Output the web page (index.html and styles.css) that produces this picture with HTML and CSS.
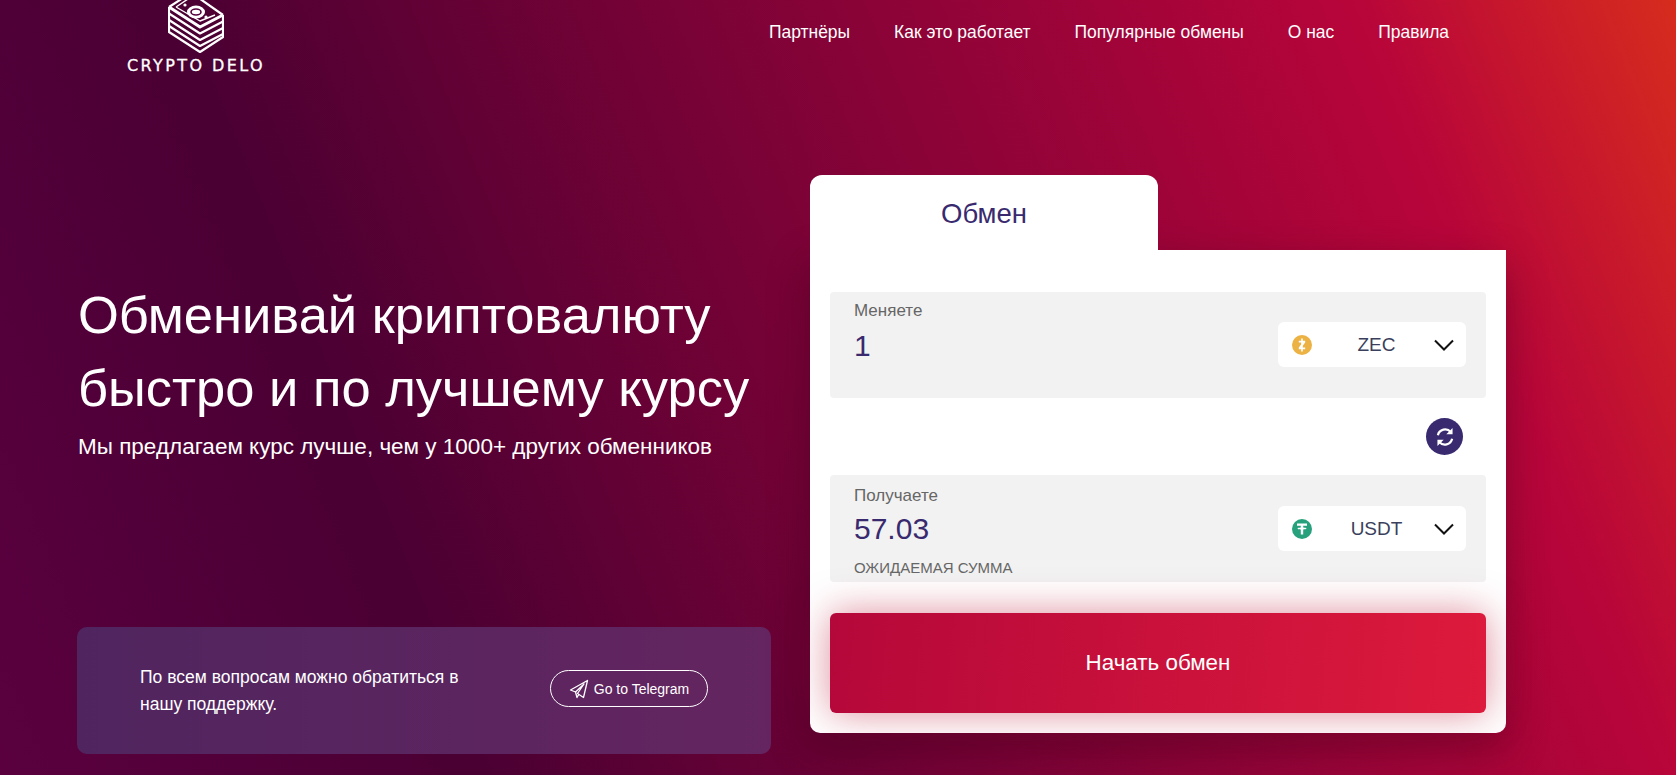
FILE: index.html
```html
<!DOCTYPE html>
<html lang="ru">
<head>
    <meta charset="UTF-8">
    <meta name="viewport" content="width=device-width, initial-scale=1.0">
    <title>Crypto Delo</title>
    <link rel="stylesheet" href="styles.css">
</head>
<body>
    <header class="header">
        <a class="logo" href="#">
            <svg class="logo-icon" width="56" height="54" viewBox="0 0 56 54" fill="none" stroke="#fff" stroke-width="2.2" stroke-linejoin="round">
                <path d="M1 7V32L32 52L55 37V15"/>
                <path d="M1 7L15 -2M55 15L28 -4"/>
                <path d="M1 7L32 27L55 15" stroke-width="3"/>
                <path d="M1 13.5L32 33.5L55 21.5"/>
                <path d="M1 20L32 40L55 28"/>
                <path d="M1 26L32 46L55 34"/>
                <path d="M8 7L20 -1M47 15L32 21L8 7" stroke-width="1.4"/>
                <ellipse cx="28" cy="12" rx="9" ry="6.5" fill="#fff" stroke="none"/>
                <ellipse cx="28" cy="12" rx="5" ry="3" stroke="#54003c" stroke-width="1.6"/>
                <circle cx="17" cy="5" r="1.6" fill="#fff" stroke="none"/>
                <circle cx="38" cy="17" r="1.6" fill="#fff" stroke="none"/>
            </svg>
            <span class="logo-text">CRYPTO DELO</span>
        </a>
        <nav class="nav">
            <a href="#">Партнёры</a>
            <a href="#">Как это работает</a>
            <a href="#">Популярные обмены</a>
            <a href="#">О нас</a>
            <a href="#">Правила</a>
        </nav>
    </header>

    <main class="main">
        <section class="hero">
            <h1>Обменивай криптовалюту быстро и по лучшему курсу</h1>
            <p class="hero-sub">Мы предлагаем курс лучше, чем у 1000+ других обменников</p>

            <div class="support">
                <p>По всем вопросам можно обратиться в нашу поддержку.</p>
                <a class="telegram-btn" href="#">
                    <svg width="20" height="20" viewBox="0 0 20 20" fill="none" stroke="#fff" stroke-width="1.3" stroke-linejoin="round">
                        <path d="M18.5 1.5L1.5 11L6.5 13L15 5L8.5 14.5L14.5 18.5Z"/>
                        <path d="M6.5 13L8 18.5L9.8 15.4"/>
                    </svg>
                    Go to Telegram
                </a>
            </div>
        </section>

        <section class="exchange">
            <div class="tab">Обмен</div>
            <div class="panel">
                <div class="field">
                    <div class="field-info">
                        <label>Меняете</label>
                        <div class="amount">1</div>
                    </div>
                    <div class="select">
                        <svg width="20" height="20" viewBox="0 0 20 20">
                            <circle cx="10" cy="10" r="10" fill="#ecb244"/>
                            <path d="M6.8 5.8H13.2V7.6L9.4 12.6H13.2V14.2H6.8V12.4L10.6 7.4H6.8Z" fill="#fff"/>
                            <path d="M9.2 3.6H10.8V16.4H9.2Z" fill="#fff"/>
                        </svg>
                        <span class="coin">ZEC</span>
                        <svg class="chevron" width="20" height="12" viewBox="0 0 20 12" fill="none" stroke="#111" stroke-width="2">
                            <path d="M1 1.5L10 10.5L19 1.5"/>
                        </svg>
                    </div>
                </div>

                <div class="swap-row">
                    <button class="swap">
                        <svg width="20" height="20" viewBox="0 0 18 18" fill="none" stroke="#fff" stroke-width="2">
                            <path d="M2.6 7.4A6.6 6.6 0 0 1 14.2 4.6"/>
                            <path d="M15.4 10.6A6.6 6.6 0 0 1 3.8 13.4"/>
                            <path d="M15.8 .8V6.6H10.2Z" fill="#fff" stroke="none"/>
                            <path d="M2.2 17.2V11.4H7.8Z" fill="#fff" stroke="none"/>
                        </svg>
                    </button>
                </div>

                <div class="field field-receive">
                    <div class="field-info">
                        <label>Получаете</label>
                        <div class="amount">57.03</div>
                        <div class="field-note">ОЖИДАЕМАЯ СУММА</div>
                    </div>
                    <div class="select">
                        <svg width="20" height="20" viewBox="0 0 20 20">
                            <circle cx="10" cy="10" r="10" fill="#26a17b"/>
                            <path d="M5 4.6H15V6.8H11.2V8.4C13 8.5 14.6 8.9 14.6 9.4C14.6 9.9 13 10.3 11.2 10.4V15.4H8.8V10.4C7 10.3 5.4 9.9 5.4 9.4C5.4 8.9 7 8.5 8.8 8.4V6.8H5Z" fill="#fff"/>
                        </svg>
                        <span class="coin">USDT</span>
                        <svg class="chevron" width="20" height="12" viewBox="0 0 20 12" fill="none" stroke="#111" stroke-width="2">
                            <path d="M1 1.5L10 10.5L19 1.5"/>
                        </svg>
                    </div>
                </div>

                <button class="start-btn">Начать обмен</button>
            </div>
        </section>
    </main>
</body>
</html>
```

FILE: styles.css
```css
* {
    margin: 0;
    padding: 0;
    box-sizing: border-box;
    font-family: "Liberation Sans", Arial, sans-serif;
}

html, body {
    height: 775px;
    overflow: hidden;
}

body {
    color: #fff;
    background: linear-gradient(68deg, #5a003f 0%, #4a0033 24%, #b8053a 84%, #d62c1d 100%);
}

a {
    color: inherit;
    text-decoration: none;
}

.header {
    display: flex;
    align-items: flex-start;
    height: 175px;
    padding-left: 128px;
}

.logo {
    display: flex;
    flex-direction: column;
    align-items: center;
    width: 136px;
}

.logo-icon {
    display: block;
    margin-left: -1px;
}

.logo-text {
    margin-top: 3px;
    font-family: "DejaVu Sans", sans-serif;
    font-size: 16px;
    line-height: 18px;
    letter-spacing: 2.4px;
    white-space: nowrap;
    -webkit-text-stroke: 0.3px #fff;
}

.nav {
    display: flex;
    gap: 44px;
    margin-left: 505px;
    padding-top: 22px;
    font-size: 17.45px;
    line-height: 20px;
}

.main {
    display: flex;
    padding-left: 77px;
}

.hero {
    display: flex;
    flex-direction: column;
    width: 694px;
    height: 579px;
    padding-top: 103px;
}

.hero h1 {
    padding-left: 1px;
    font-size: 52.5px;
    font-weight: 400;
    line-height: 73px;
}

.hero-sub {
    margin-top: 8px;
    padding-left: 1px;
    font-size: 22.5px;
    line-height: 30px;
}

.support {
    display: flex;
    align-items: center;
    justify-content: space-between;
    height: 127px;
    margin-top: auto;
    padding: 0 63px;
    border-radius: 10px;
    background: linear-gradient(90deg, #50255f, #642560);
}

.support p {
    width: 330px;
    font-size: 17.5px;
    line-height: 27px;
}

.telegram-btn {
    display: flex;
    align-items: center;
    justify-content: center;
    gap: 5px;
    width: 158px;
    height: 37px;
    margin-bottom: 4px;
    border: 1px solid #fff;
    border-radius: 19px;
    font-size: 14px;
}

.exchange {
    width: 696px;
    margin-left: 39px;
}

.tab {
    position: relative;
    z-index: 1;
    width: 348px;
    height: 75px;
    border-radius: 12px 12px 0 0;
    background: #fff;
    color: #392a6f;
    font-size: 27.5px;
    line-height: 77px;
    text-align: center;
}

.panel {
    height: 483px;
    padding: 42px 20px 0;
    border-radius: 0 0 10px 10px;
    background: #fff;
    box-shadow: 0 15px 40px rgba(40, 0, 20, 0.35);
}

.field {
    display: flex;
    justify-content: space-between;
    height: 106px;
    padding: 9px 20px 0 24px;
    border-radius: 4px;
    background: #f2f2f2;
}

.field-info label {
    display: block;
    color: #666;
    font-size: 17px;
    line-height: 20px;
}

.amount {
    margin-top: 5px;
    color: #392a6f;
    font-size: 30px;
    line-height: 40px;
}

.field-note {
    margin-top: 10px;
    color: #666;
    font-size: 15px;
    line-height: 18px;
}

.field-receive {
    height: 107px;
    padding-top: 11px;
}

.field-receive .amount {
    margin-top: 3px;
}

.field-receive .select {
    margin-top: 20px;
}

.select {
    display: flex;
    align-items: center;
    width: 188px;
    height: 45px;
    margin-top: 21px;
    padding: 0 12px 0 14px;
    border-radius: 6px;
    background: #fff;
}

.coin {
    flex: 1;
    padding: 1px 0 0 7px;
    color: #3a3f5c;
    font-size: 19px;
    text-align: center;
}

.chevron {
    flex-shrink: 0;
}

.swap-row {
    display: flex;
    justify-content: flex-end;
    height: 77px;
    padding: 20px 23px 0 0;
}

.swap {
    display: flex;
    align-items: center;
    justify-content: center;
    width: 37px;
    height: 37px;
    border: none;
    border-radius: 50%;
    background: #392a6f;
}

.start-btn {
    display: block;
    width: 100%;
    height: 100px;
    margin-top: 31px;
    padding-bottom: 1px;
    border: none;
    border-radius: 6px;
    background: linear-gradient(95deg, #b5083a, #dd1a3c);
    box-shadow: 0 0 38px rgba(190, 30, 60, 0.5);
    color: #fff;
    font-size: 22.4px;
}
```
